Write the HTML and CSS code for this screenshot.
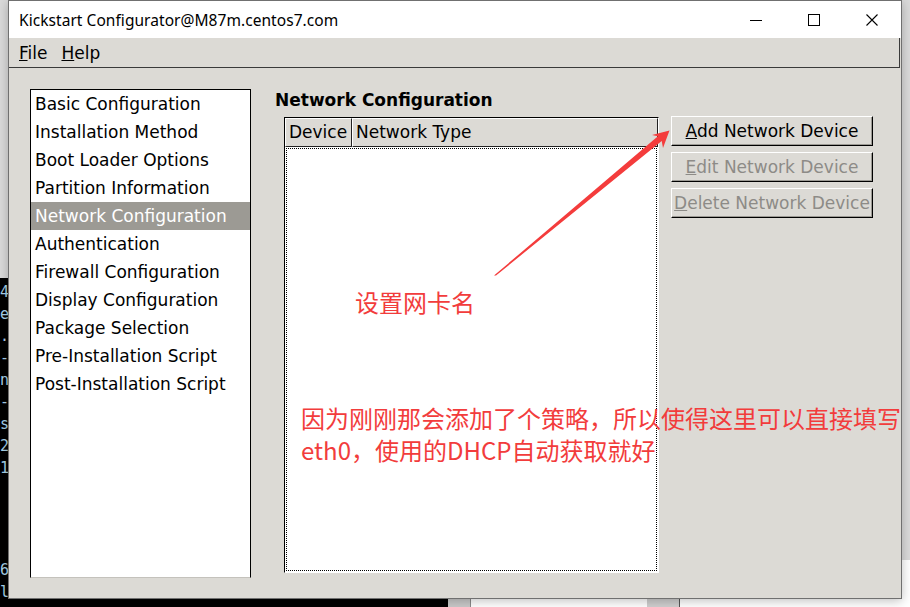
FILE: index.html
```html
<!DOCTYPE html>
<html lang="zh-CN">
<head>
<meta charset="utf-8">
<title>Kickstart Configurator</title>
<link rel="stylesheet" href="styles.css">
</head>
<body>
<div class="desktop">
  <div class="terminal">
    <div class="term-line">4</div>
    <div class="term-line">e</div>
    <div class="term-line">.</div>
    <div class="term-line">-</div>
    <div class="term-line">n</div>
    <div class="term-line">-</div>
    <div class="term-line">s</div>
    <div class="term-line">2</div>
    <div class="term-line">1</div>
    <div class="term-gap"></div>
    <div class="term-line">6</div>
    <div class="term-line">l</div>
  </div>
  <div class="bgwin">
    <div class="strip strip-gray"></div>
    <div class="strip strip-white"></div>
    <div class="strip strip-gray2"></div>
    <div class="strip strip-rest"></div>
  </div>

  <div class="window">
    <div class="titlebar">
      <span class="title">Kickstart Configurator@M87m.centos7.com</span>
      <div class="controls">
        <span class="ctl"><svg width="12" height="12" viewBox="0 0 12 12"><path d="M0 6.5H12" stroke="#000" stroke-width="1"/></svg></span>
        <span class="ctl"><svg width="12" height="12" viewBox="0 0 12 12"><rect x="0.5" y="0.5" width="11" height="11" fill="none" stroke="#000" stroke-width="1"/></svg></span>
        <span class="ctl"><svg width="12" height="12" viewBox="0 0 12 12"><path d="M0.5 0.5L11.5 11.5M11.5 0.5L0.5 11.5" stroke="#000" stroke-width="1.1"/></svg></span>
      </div>
    </div>
    <div class="menubar">
      <span class="menu"><u>F</u>ile</span>
      <span class="menu"><u>H</u>elp</span>
    </div>
    <div class="content">
      <ul class="sidebar">
        <li>Basic Configuration</li>
        <li>Installation Method</li>
        <li>Boot Loader Options</li>
        <li>Partition Information</li>
        <li class="selected">Network Configuration</li>
        <li>Authentication</li>
        <li>Firewall Configuration</li>
        <li>Display Configuration</li>
        <li>Package Selection</li>
        <li>Pre-Installation Script</li>
        <li>Post-Installation Script</li>
      </ul>
      <div class="main">
        <h2 class="section-title">Network Configuration</h2>
        <div class="panel">
          <div class="table">
            <div class="thead">
              <div class="th col-device">Device</div>
              <div class="th col-type">Network Type</div>
            </div>
            <div class="tbody"></div>
          </div>
          <div class="buttons">
            <div class="btn"><u>A</u>dd Network Device</div>
            <div class="btn disabled"><u>E</u>dit Network Device</div>
            <div class="btn disabled"><u>D</u>elete Network Device</div>
          </div>
        </div>
      </div>
    </div>
  </div>

  <svg class="arrow" width="910" height="607" viewBox="0 0 910 607">
    <polygon points="494,275.5 657.9,136.3 652,135 669.5,130.5 663,148 661.7,140.9 496,275.5" fill="#f43c3c"/>
  </svg>
  <div class="note note-1">设置网卡名</div>
  <div class="note note-2">因为刚刚那会添加了个策略，所以使得这里可以直接填写<br>eth0，使用的DHCP自动获取就好</div>
</div>
</body>
</html>
```
FILE: styles.css
```css
html, body {
  margin: 0;
  padding: 0;
}
body {
  width: 910px;
  height: 607px;
  overflow: hidden;
  background: #d8d8d8;
  font-family: "DejaVu Sans", sans-serif;
}
.desktop {
  position: relative;
  width: 910px;
  height: 607px;
  background: #dadada;
}

/* background desktop windows */
.terminal {
  position: absolute;
  left: 0;
  top: 278px;
  width: 448px;
  height: 329px;
  background: #000;
  padding-top: 3px;
  box-sizing: border-box;
  font-family: "DejaVu Sans Mono", monospace;
  font-size: 15px;
  color: #a9d3ea;
}
.term-line {
  height: 22px;
  line-height: 22px;
}
.term-gap {
  height: 80px;
}
.bgwin {
  position: absolute;
  left: 448px;
  top: 560px;
  right: 0;
  bottom: 0;
  display: flex;
}
.strip { height: 100%; }
.strip-gray { width: 22px; background: #c9c9c9; border-right: 1px solid #8a8a8a; }
.strip-white { width: 176px; background: #fff; }
.strip-gray2 { width: 32px; background: #cfcfcf; border-right: 1px solid #555; }
.strip-rest { flex: 1; background: #fff; }

/* main window */
.window {
  position: absolute;
  left: 8px;
  top: 0;
  width: 894px;
  height: 599px;
  box-sizing: border-box;
  border: 1px solid #707070;
  background: #dcdad5;
  display: flex;
  flex-direction: column;
  box-shadow: 0 2px 10px rgba(0, 0, 0, 0.25);
}
.titlebar {
  height: 37px;
  background: #fff;
  display: flex;
  align-items: center;
  padding-left: 10px;
}
.title {
  font-family: "Noto Sans", "Open Sans", sans-serif;
  font-size: 15.5px;
  color: #000;
  letter-spacing: 0.05px;
}
.controls {
  margin-left: auto;
  display: flex;
  height: 100%;
}
.ctl {
  width: 58px;
  height: 100%;
  display: flex;
  align-items: center;
  justify-content: center;
}
.menubar {
  height: 29px;
  border-bottom: 1px solid #3a3a3a;
  border-right: 1px solid #3a3a3a;
  margin-right: 1px;
  display: flex;
  align-items: center;
  padding-left: 3px;
  font-size: 17px;
  color: #000;
}
.menu {
  padding: 0 7px;
}

.content {
  flex: 1;
  display: flex;
  align-items: flex-start;
  padding: 21px 0 0 21px;
}
.sidebar {
  list-style: none;
  margin: 0;
  padding: 0;
  width: 221px;
  height: 489px;
  box-sizing: border-box;
  background: #fff;
  border: 1px solid #000;
  border-bottom-color: #c4c2bc;
}
.sidebar li {
  height: 28px;
  line-height: 28px;
  padding-left: 4px;
  font-size: 17px;
  color: #000;
  white-space: nowrap;
}
.sidebar li.selected {
  background: #9c9a94;
  color: #fff;
}

.main {
  margin-left: 24px;
  display: flex;
  flex-direction: column;
}
.section-title {
  margin: 0 0 6px 0;
  font-size: 17px;
  font-weight: bold;
  line-height: 22px;
  color: #000;
}
.panel {
  display: flex;
  align-items: flex-start;
  margin-left: 9px;
}
.table {
  width: 375px;
  height: 456px;
  box-sizing: border-box;
  border: 1px solid #000;
  border-right-color: #fff;
  border-bottom-color: #fff;
  display: flex;
  flex-direction: column;
  background: #fff;
}
.thead {
  display: flex;
  height: 29px;
  background: #dcdad5;
}
.th {
  box-sizing: border-box;
  height: 29px;
  line-height: 27px;
  font-size: 17px;
  color: #000;
  padding-left: 3px;
  border-top: 1px solid #fff;
  border-left: 1px solid #fff;
  border-right: 1px solid #222;
  border-bottom: 1px solid #222;
  white-space: nowrap;
}
.col-device { width: 67px; }
.col-type { flex: 1; }
.tbody {
  flex: 1;
  margin: 1px;
  border: 1px dotted #000;
  background: #fff;
}

.buttons {
  margin-left: 12px;
  margin-top: -1px;
  display: flex;
  flex-direction: column;
  gap: 6px;
}
.btn {
  width: 202px;
  height: 30px;
  box-sizing: border-box;
  border: 1px solid #000;
  border-top-color: #fff;
  border-left-color: #fff;
  box-shadow: inset -1px -1px 0 #9c9a94;
  background: #dcdad5;
  font-size: 17px;
  line-height: 28px;
  text-align: center;
  color: #000;
  white-space: nowrap;
}
.btn.disabled {
  color: #8d8b87;
}

/* annotations */
.arrow {
  position: absolute;
  left: 0;
  top: 0;
  pointer-events: none;
}
.note {
  position: absolute;
  color: #f23c3c;
  font-family: "Noto Sans CJK SC", "Noto Sans", sans-serif;
  white-space: nowrap;
}
.note-1 {
  left: 355px;
  top: 286px;
  font-size: 24px;
  line-height: 32px;
}
.note-2 {
  left: 301px;
  top: 402px;
  font-size: 24px;
  line-height: 32px;
}
```
